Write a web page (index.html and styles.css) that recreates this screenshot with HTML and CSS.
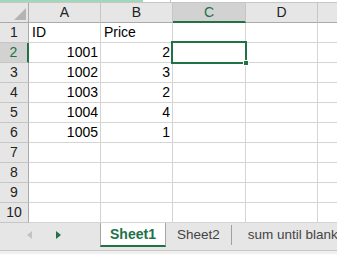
FILE: index.html
```html
<!DOCTYPE html>
<html>
<head>
    <meta charset="UTF-8">
    <title>Sheet1</title>
    <link rel="stylesheet" href="styles.css">
</head>
<body>

    <div class="strip">
        <div class="strip-fill"></div>
        <div class="strip-gap"></div>
        <div class="strip-rest"></div>
    </div>

    <div class="sheet">
        <div class="row">
            <div class="cell w-row corner"></div>
            <div class="cell w-a col-head">A</div>
            <div class="cell w-b col-head">B</div>
            <div class="cell w-c col-head active">C</div>
            <div class="cell w-d col-head">D</div>
            <div class="cell w-e col-head"></div>
        </div>
        <div class="row">
            <div class="cell w-row row-head">1</div>
            <div class="cell w-a">ID</div>
            <div class="cell w-b">Price</div>
            <div class="cell w-c"></div>
            <div class="cell w-d"></div>
            <div class="cell w-e"></div>
        </div>
        <div class="row">
            <div class="cell w-row row-head active">2</div>
            <div class="cell w-a num">1001</div>
            <div class="cell w-b num">2</div>
            <div class="cell w-c selected"><span class="sel-box"><span class="handle"></span></span></div>
            <div class="cell w-d"></div>
            <div class="cell w-e"></div>
        </div>
        <div class="row">
            <div class="cell w-row row-head">3</div>
            <div class="cell w-a num">1002</div>
            <div class="cell w-b num">3</div>
            <div class="cell w-c"></div>
            <div class="cell w-d"></div>
            <div class="cell w-e"></div>
        </div>
        <div class="row">
            <div class="cell w-row row-head">4</div>
            <div class="cell w-a num">1003</div>
            <div class="cell w-b num">2</div>
            <div class="cell w-c"></div>
            <div class="cell w-d"></div>
            <div class="cell w-e"></div>
        </div>
        <div class="row">
            <div class="cell w-row row-head">5</div>
            <div class="cell w-a num">1004</div>
            <div class="cell w-b num">4</div>
            <div class="cell w-c"></div>
            <div class="cell w-d"></div>
            <div class="cell w-e"></div>
        </div>
        <div class="row">
            <div class="cell w-row row-head">6</div>
            <div class="cell w-a num">1005</div>
            <div class="cell w-b num">1</div>
            <div class="cell w-c"></div>
            <div class="cell w-d"></div>
            <div class="cell w-e"></div>
        </div>
        <div class="row">
            <div class="cell w-row row-head">7</div>
            <div class="cell w-a"></div>
            <div class="cell w-b"></div>
            <div class="cell w-c"></div>
            <div class="cell w-d"></div>
            <div class="cell w-e"></div>
        </div>
        <div class="row">
            <div class="cell w-row row-head">8</div>
            <div class="cell w-a"></div>
            <div class="cell w-b"></div>
            <div class="cell w-c"></div>
            <div class="cell w-d"></div>
            <div class="cell w-e"></div>
        </div>
        <div class="row">
            <div class="cell w-row row-head">9</div>
            <div class="cell w-a"></div>
            <div class="cell w-b"></div>
            <div class="cell w-c"></div>
            <div class="cell w-d"></div>
            <div class="cell w-e"></div>
        </div>
        <div class="row">
            <div class="cell w-row row-head">10</div>
            <div class="cell w-a"></div>
            <div class="cell w-b"></div>
            <div class="cell w-c"></div>
            <div class="cell w-d"></div>
            <div class="cell w-e"></div>
        </div>
    </div>

    <div class="tabs">
        <div class="tab-nav">
            <span class="arrow-left"></span>
            <span class="arrow-right"></span>
        </div>
        <div class="tab current">Sheet1</div>
        <div class="tab">Sheet2</div>
        <div class="tab-sep"></div>
        <div class="tab last">sum until blank</div>
    </div>

</body>
</html>
```

FILE: styles.css
```css
body {
    margin: 0;
    width: 337px;
    height: 254px;
    overflow: hidden;
    background: #f0f0f0;
    font-family: "Liberation Sans", Arial, sans-serif;
    color: #000;
}

.strip {
    display: flex;
    height: 3px;
    box-sizing: border-box;
    border-bottom: 1px solid #c6c6c6;
    background: #fff;
}
.strip-fill {
    width: 143px;
    background: #a3d7b9;
}
.strip-gap {
    width: 27px;
    border-right: 1px solid #c6c6c6;
}
.strip-rest {
    flex: 1;
}

.sheet {
    background: #fff;
}
.row {
    display: flex;
    height: 20px;
}
.cell {
    box-sizing: border-box;
    height: 20px;
    border-right: 1px solid #d4d4d4;
    border-bottom: 1px solid #d4d4d4;
    padding: 0 2px 0 3px;
    font-size: 14px;
    line-height: 19px;
    white-space: nowrap;
    overflow: hidden;
}
.w-row { width: 29px; }
.w-a { width: 72px; }
.w-b { width: 72px; }
.w-c { width: 73px; }
.w-d { width: 72px; }
.w-e { flex: 1; border-right: none; }

.num {
    text-align: right;
}

.col-head, .corner, .row-head {
    background: #e6e6e6;
    color: #222;
    text-align: center;
    padding: 0;
}
.col-head {
    border-right-color: #c6c6c6;
    border-bottom-color: #ababab;
}
.corner {
    position: relative;
    border-right-color: #ababab;
    border-bottom-color: #ababab;
}
.corner::after {
    content: "";
    position: absolute;
    right: 2px;
    bottom: 2px;
    border-left: 12px solid transparent;
    border-bottom: 12px solid #b4b4b4;
}
.row-head {
    border-right-color: #ababab;
    border-bottom-color: #c6c6c6;
}
.col-head.active {
    background: #d2d2d2;
    color: #217346;
    border-bottom: 2px solid #217346;
    line-height: 18px;
}
.row-head.active {
    background: #d2d2d2;
    color: #217346;
    border-right: 2px solid #217346;
}

.selected {
    position: relative;
    overflow: visible;
}
.sel-box {
    position: absolute;
    top: -2px;
    left: -2px;
    right: -2px;
    bottom: -2px;
    border: 2px solid #217346;
}
.handle {
    position: absolute;
    right: -4px;
    bottom: -4px;
    width: 6px;
    height: 6px;
    box-sizing: border-box;
    background: #217346;
    border: 1px solid #fff;
}

.tabs {
    display: flex;
    height: 28px;
    box-sizing: border-box;
    background: #e6e6e6;
    border-bottom: 1px solid #c6c6c6;
    font-size: 13.5px;
    color: #444;
    white-space: nowrap;
    overflow: hidden;
}
.tab-nav {
    flex-shrink: 0;
    width: 100px;
    display: flex;
    align-items: center;
    padding-bottom: 4px;
    box-sizing: border-box;
}
.arrow-left {
    margin-left: 27px;
    border-top: 4px solid transparent;
    border-bottom: 4px solid transparent;
    border-right: 5px solid #c3c3c3;
}
.arrow-right {
    margin-left: 24px;
    border-top: 4px solid transparent;
    border-bottom: 4px solid transparent;
    border-left: 5px solid #217346;
}
.tab {
    flex-shrink: 0;
    height: 24px;
    line-height: 23px;
    padding: 0 11px;
    box-sizing: border-box;
}
.tab.current {
    width: 66px;
    padding: 0;
    text-align: center;
    background: #fff;
    color: #217346;
    font-weight: bold;
    font-size: 14px;
    border-left: 1px solid #a6a6a6;
    border-right: 1px solid #a6a6a6;
    border-bottom: 2px solid #217346;
    line-height: 22px;
}
.tab-sep {
    flex-shrink: 0;
    width: 1px;
    height: 20px;
    margin-top: 2px;
    background: #a0a0a0;
}
.tab.last {
    padding-left: 16px;
}
```
